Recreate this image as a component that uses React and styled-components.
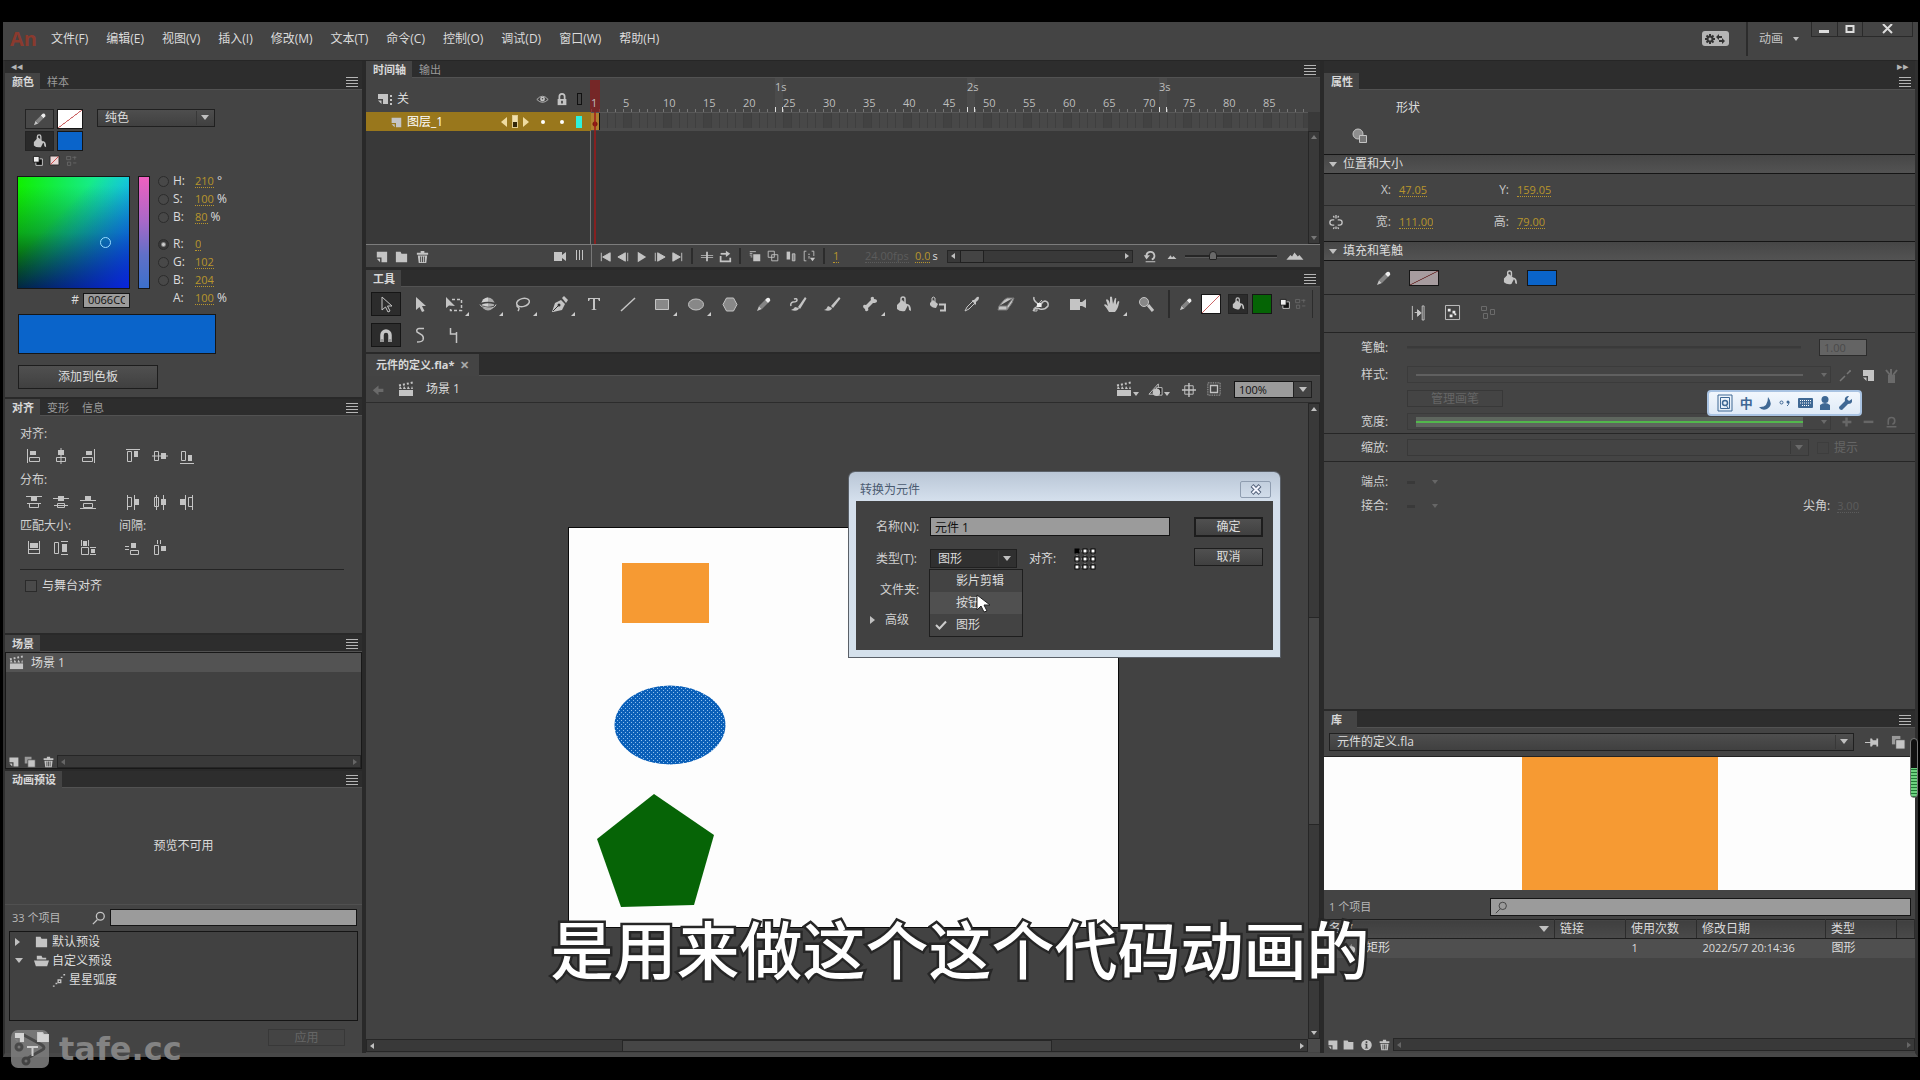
import React from "react";
import styled, { createGlobalStyle, css } from "styled-components";

const Global = createGlobalStyle`
  * { box-sizing: border-box; }
  html, body { margin: 0; background: #000; overflow: hidden; }
  body, button, input, select, table {
    font-family: "Open Sans", "Noto Sans CJK SC", sans-serif;
    font-size: 12px;
    line-height: 16px;
    color: #dcdcdc;
  }
  button { background: none; border: 0; padding: 0; margin: 0; }
  input { margin: 0; }
  svg { display: block; flex: none; }
`;

/* ---------- icons ---------- */
const F = "#c4c4c4";
const line = { fill: "none", stroke: F, strokeWidth: 1 };
const thick = { fill: "none", stroke: F, strokeWidth: 2 };

const DRAWINGS = {
  menu: <path d="M2 4.500h12M2 7.500h12M2 10.500h12M2 13.500h12" {...line} stroke="#b5b5b5" />,
  page: <path d="M3 3h11v11H8V9H3z M3 10.500h3.500V14z" fill={F} />,
  pageDots: <g fill={F}><path d="M1 3h10v10H6V8H1z M1 9.500h3.500V13z" /><path d="M13 4h2v2h-2zM13 8h2v2h-2zM13 12h2v2h-2z" /></g>,
  folder: <path d="M2 3h5l1 2h6v9H2z" fill={F} />,
  folderOpen: <path d="M3 3h5l1 2h4v2H3z M0 8h16l-2 6H2z" fill={F} />,
  trash: <g><path d="M3 7h10l-1 8H4z M2 4h12v2H2z M6 2h4v2H6z" fill={F} /><path d="M6 8v6M8 8v6M10 8v6" stroke="#444" /></g>,
  eye: <g><path d="M1 8q7-8 14 0q-7 7-14 0z" {...line} /><circle cx="8" cy="7.500" r="3" fill={F} /><circle cx="8" cy="7" r="1" fill="#444" /></g>,
  lock: <g><path d="M3 8h10v7H3z" fill={F} /><path d="M5 8V5q0-3 3-3t3 3v3" {...thick} /><path d="M7 10h2v3H7z" fill="#444" /></g>,
  camera: <path d="M2 4h8v3l4-3v9l-4-3v3H2z" fill={F} />,
  bars: <path d="M4.500 2v10M7.500 2v10M10.500 2v10" {...line} />,
  first: <path d="M3.500 4v9M13 4v9L5 8.500z" {...line} fill={F} />,
  prev: <path d="M10 4v9L2 8.500zM12.500 4v9" {...line} fill={F} />,
  play: <path d="M4 3l9 5.500L4 14z" fill={F} />,
  next: <path d="M6 4v9l8-4.500zM3.500 4v9" {...line} fill={F} />,
  last: <path d="M3 4v9l8-4.500zM12.500 4v9" {...line} fill={F} />,
  centerFrame: <g fill={F}><path d="M7 3h2v11H7z" /><path d="M1 7h14v1H1zM1 9h14v1H1z" /></g>,
  loopHead: <g><path d="M3 8v6h11v-4" {...thick} /><path d="M3 5.500h7" {...thick} /><path d="M9 2l5 3.500L9 9z" fill={F} /></g>,
  onion1: <g><path d="M6 6h8v8H6z" fill={F} /><path d="M2 3h7M2 5h3M2 7h3M3 9h2" {...line} /></g>,
  onion2: <path d="M2.500 2.500h7v7h-7zM6.500 6.500h7v7h-7z" {...line} />,
  onion3: <g><path d="M3 3h4v9H3z" fill={F} /><path d="M9.500 5.500h3v8h-3z" {...line} fill="#888" /></g>,
  onion4: <g><path d="M5 2.500H2.500v11H5M11 2.500h2.500V8M7 6h2M8 8v3" {...line} /><path d="M9 10h6l-3 4z" fill={F} /></g>,
  reset: <g><path d="M4 8a4.500 4.500 0 1 1 6 4" {...thick} /><path d="M1 7h7L4 12zM3 14h11v1H3z" fill={F} /></g>,
  hillSmall: <path d="M2 12l4-5 2 3 2-2 4 4z" fill={F} />,
  hillBig: <path d="M-2 12l5-6 2 2 3-5 4 5 2-2 5 6z" fill={F} />,
  back: <path d="M8 3v4h6v4H8v4L1 9z" fill="#6a6a6a" />,
  clapper: <g><path d="M1 9h14v6H1z" fill={F} /><path d="M1 8l1-3 2 3zM5 8l1-3 2 3zM9 8l1-3 2 3zM13 8l1-3 1 3z" fill={F} /><path d="M1 4.500l14-3" {...thick} strokeDasharray="2 2" /></g>,
  symbols: <g><path d="M1 13L11 2v11z" {...line} /><path d="M9 6h6v8H9z" fill="#222" stroke={F} /><circle cx="9" cy="11" r="4" fill={F} /></g>,
  crosshair: <g><path d="M4 4h9v9H4z" {...line} /><path d="M8.500 1v15M1 8.500h15" {...line} strokeWidth="1.500" /></g>,
  clip: <g><path d="M4 4h8v8H4z" {...thick} strokeWidth="1.500" /><path d="M1 1h14v14H1z" {...line} strokeDasharray="1 1" /></g>,
  arrowOutline: <path d="M4 1v13l3.500-3 2.500 5 2-1-2.500-5H14z" {...line} />,
  arrow: <path d="M4 1v13l3.500-3 2.500 5 2.500-1-2.500-5H14z" fill={F} />,
  transform: <g><path d="M6 3.500h9.500v11h-11V11" {...line} strokeWidth="1.500" strokeDasharray="3 2" /><path d="M0 1v11l3-2.500L9 10z" fill={F} /></g>,
  rotate3d: <g><circle cx="8" cy="8" r="6.500" fill="#aaa" /><path d="M8 1.500a6.500 6.500 0 0 0-6.500 6q3 3 6.500 3z" fill="#d0d0d0" /><ellipse cx="8" cy="9" rx="7.500" ry="2.500" fill="none" stroke="#444" strokeWidth="1.500" /><path d="M0 8.500q1 3 8 3.500t8-3.500" {...line} /></g>,
  lasso: <g><ellipse cx="9" cy="6.500" rx="6.500" ry="4" transform="rotate(-14 9 6.500)" {...line} strokeWidth="1.500" /><path d="M4 9q-2 1 0 2t0 4" {...line} strokeWidth="1.500" /></g>,
  pen: <g><path d="M0 16l3-9 6-3 4 4-3 6-9 2z" fill={F} /><path d="M10 2l2-2 4 4-2 3z" fill={F} /><path d="M1 15l6-6" stroke="#333" /><circle cx="7" cy="9" r="1.500" fill="#333" /></g>,
  text: <path d="M2 2h12v3h-1l-1-2H9v10l2 1H5l2-1V3H4L3 5H2z" fill={F} />,
  line: <path d="M1 15L15 2" {...line} strokeWidth="1.500" />,
  rect: <path d="M1.500 3.500h13v10h-13z" fill="#888" stroke={F} />,
  oval: <ellipse cx="8" cy="8.500" rx="7.500" ry="5.500" fill="#888" stroke={F} />,
  hex: <path d="M4.500 2h7L15 8.500 11.500 15h-7L1 8.500z" fill="#888" stroke={F} />,
  pencil: <g><path d="M1 15l2-5 3 3z" fill={F} /><path d="M3 10l6-6 3 3-6 6z" fill="#858585" /><path d="M9 4l2-2q2-1 3 1t-1 3l-1 1z" fill="#eee" /></g>,
  brushWave: <g><path d="M8 11l7-10 1.500 1.500L10 13z" fill={F} /><path d="M1 14q3-1 4-3l4 1q-1 4-8 2z" fill={F} /><path d="M1 10q-1-3 2-4 4 0 4-2 0-2-3-1" {...line} strokeWidth="1.500" /></g>,
  brush: <path d="M0 14q3-1 4-4l4 2q-1 4-8 2zM7 10l8-9 1.500 1.500L9 12z" fill={F} />,
  bone: <path d="M1 10q1-2 3-1l5-5q-1-3 1-3 2-1 2 2 3 0 3 2 0 2-4 2l-5 5q1 3-1 3-2 1-2-2-2-1-2-3z" fill={F} />,
  bucket: <g><path d="M1 9l5-5 6 5-3 6q-5 1-8-2z" fill={F} /><path d="M5 7V3q0-2 2-2t2 2v4" {...line} strokeWidth="1.500" /><path d="M11 8q4 0 4 7l-2-1q0-4-2-5z" fill={F} /></g>,
  inkBottle: <g><path d="M0 7l3-3 5 4-2 4q-4 0-6-3z" fill={F} /><path d="M2 6V2q1-2 3 0v4" {...line} /><path d="M9 8.500h6v6h-5" {...thick} /></g>,
  dropper: <g><path d="M1 15l2-4 6-6 2 2-6 6z" {...line} /><path d="M8 4l2 0 3-3q2-1 2 1t-3 4v2l-1 1z" fill={F} /></g>,
  eraser: <path d="M6 4l3-2h7l-2 5-5 7H0l1-4z M1 10h8l6-8M9 10v4" fill={F} stroke="#777" />,
  width: <g><path d="M2 1q-1 3 3 6t4 3q0-4 4-5 4 1 3 5-3 4-8 3-4-2-7 2" {...line} strokeWidth="1.500" /><path d="M3 12l7-8M2 12h3v3H2z" {...line} /><path d="M5 7h4v4H5z" fill="#eee" /></g>,
  movie: <path d="M0 3h10v3h2l4-3v9l-4-2h-2v4H0z" fill={F} />,
  hand: <path d="M5 16q-3-5-5-7 1-2 4 1L2 4q1-2 3 1l1 3V1q1-1 2 0l1 7 2-6q2 0 1 2v5l2-4q2 0 1 2-1 6-4 9z" fill={F} />,
  zoom: <g><circle cx="6" cy="6" r="4.500" fill="#888" stroke={F} /><path d="M10 9l5 6" {...thick} strokeWidth="3" /></g>,
  search: <g fill="none" stroke={F} strokeWidth="1.500"><circle cx="9.500" cy="6" r="4.500" /><path d="M6 10l-5 5" /></g>,
  searchDark: <g fill="none" stroke="#333"><circle cx="9.500" cy="6" r="4.500" /><path d="M6 10l-5 5" /></g>,
  magnet: <g><path d="M4 14V8a4 4 0 0 1 8 0v6" {...thick} strokeWidth="3.500" /><path d="M2 12h4v3H2zM10 12h4v3h-4z" fill="#999" /></g>,
  smooth: <path d="M12 1.500H7Q4 2 5 5l5 3q2 2 1 5-1 2-6 2" {...line} strokeWidth="1.500" />,
  straighten: <path d="M4.500 1v6h6v9M10.500 7V5" {...line} strokeWidth="1.500" />,
  blackWhite: <g><path d="M6 6h8v8H6z" fill="#111" stroke="#ddd" /><path d="M3 3h7v7H3z" fill="#eee" stroke="#111" /></g>,
  none: <g><path d="M2.500 2.500h11v11h-11z" fill="#ead7d7" stroke="#222" /><path d="M3 13L13 3" stroke="#c33" /></g>,
  swap: <path d="M2 3h5v4H2zM3 10h4v4H3zM9 4h5M12 3v4M10 11h4" {...line} stroke="#6b6b6b" />,
  shape: <g><circle cx="6" cy="6" r="5" fill="#8e8e8e" stroke={F} /><path d="M7.500 7.500h7v7h-7z" fill="#777" stroke={F} /></g>,
  unlink: <path d="M6 5.500H4q-3 0-3 3t3 3h2M10 5.500h2q3 0 3 3t-3 3h-2M8 0v4M8 13v3M5 1l1 2M11 1l-1 2M5 16l1-2M11 16l-1-2" {...line} strokeWidth="1.500" />,
  edge: <g><path d="M2.500 1v15M13 1h2v15h-2z" {...line} /><path d="M5 8h4M8 5l4 3.500L8 12z" fill={F} stroke={F} /></g>,
  dots: <g><path d="M.5 .5h15v15H.500z" {...line} /><path d="M3 4h3v3H3zM8 6h3v3H8zM5 10h3v3H5z M10 9h2v2h-2z" fill="#eee" /></g>,
  objDraw: <path d="M1.500 2.500h5v4h-5zM3.500 9.500h4v5h-4zM10.500 5.500h4v5h-4z" {...line} stroke="#6b6b6b" />,
  pin: <path d="M0 8h6V4h2l1 2h4V4h2v9h-2v-2H9l-1 2H6V9H0z" fill={F} />,
  copy: <g><path d="M1 1h9v9H1z" fill="#999" /><path d="M5 5h10v10H5z" fill={F} stroke="#444" /></g>,
  info: <g><circle cx="8" cy="8.500" r="6.500" fill={F} /><path d="M7 4h2v2H7zM6 7h3v5h1v1H6v-1h1V8H6z" fill="#444" /></g>,
  motion: <path d="M1 15h2M4 12h2M7 8h3v3H7zM10 5h2M13 2h2" {...thick} strokeWidth="1.500" />,
  graphic: <g><path d="M3 13L11 3l2 10z" fill="#888" /><circle cx="11" cy="10" r="4" fill={F} /></g>,
  wand: <path d="M2 14l5-5M9 7l3-3M11 4h2" {...line} stroke="#777" strokeWidth="1.500" />,
  brushes: <path d="M6 9h5v6H6zM8 8V2M7 8L3 3M10 8l4-5" fill="#6b6b6b" stroke="#6b6b6b" strokeWidth="2" />,
  plus: <path d="M8 3v11M3 8.500h11" {...thick} stroke="#676767" strokeWidth="3" />,
  minus: <path d="M2 8.500h12" {...thick} stroke="#676767" strokeWidth="3" />,
  undo: <path d="M4 12V7q0-4 4-4t4 4-3 4M2 14.500h12" {...thick} stroke="#676767" />,
  alL: <g><path d="M1.500 1v14M3.500 9.500h10v4h-10z" {...line} /><path d="M4 3h6v4H4z" fill={F} /></g>,
  alC: <g><path d="M8 0v16M3.500 9.500h9v4h-9z" {...line} /><path d="M5 2h6v5H5z" fill={F} /></g>,
  alR: <g><path d="M14.500 1v14M2.500 9.500h10v4h-10z" {...line} /><path d="M6 3h6v4H6z" fill={F} /></g>,
  alT: <g><path d="M1 1.500h14M2.500 3.500h4v10h-4z" {...line} /><path d="M9 3h4v6H9z" fill={F} /></g>,
  alM: <g><path d="M0 8h16M2.500 3.500h4v9h-4z" {...line} /><path d="M9 5h5v6H9z" fill={F} /></g>,
  alB: <g><path d="M1 15.500h14M2.500 3.500h4v9h-4z" {...line} /><path d="M9 7h4v6H9z" fill={F} /></g>,
  diT: <g><path d="M0 2.500h16M1 9.500h14M3.500 9.500h9v4h-9z" {...line} /><path d="M5 3h6v4H5z" fill={F} /></g>,
  diM: <g><path d="M0 4.500h16M1 11.500h14M4.500 9.500h7v4h-7z" {...line} /><path d="M5 2h6v5H5z" fill={F} /></g>,
  diB: <g><path d="M0 6.500h16M0 14.500h16M3.500 9.500h9v4h-9z" {...line} /><path d="M5 2h6v4H5z" fill={F} /></g>,
  diL: <g><path d="M2.500 1v15M9.500 1v15M3 3.500h3.500v9H3" {...line} /><path d="M10 5h4v6h-4z" fill={F} /></g>,
  diC: <g><path d="M4.500 1v15M11.500 1v15M2.500 3.500h4v9h-4z" {...line} /><path d="M9 5h5v6H9z" fill={F} /></g>,
  diR: <g><path d="M6.500 1v15M13.500 1v15M9.500 3.500h4v9h-4z" {...line} /><path d="M1 5h5v6H1z" fill={F} /></g>,
  maW: <g><path d="M2.500 1v13M13.500 1v13M2.500 9.500h11v4h-11z" {...line} /><path d="M4 3h8v5H4z" fill={F} /></g>,
  maH: <g><path d="M1.500 2.500h4v11h-4zM8 1.500h7M8 14.500h7" {...line} /><path d="M9 4h5v8H9z" fill={F} /></g>,
  maB: <g><path d="M1.500 7.500h7v7h-7zM1.500 0v6M8.500 0v6M10 7.500h6M10 14.500h6" {...line} /><path d="M3 1h4v5H3zM11 9h4v4h-4z" fill={F} /></g>,
  spV: <g><path d="M0 6.500h4M0 9.500h4M5.500 10.500h8v4h-8z" {...line} /><path d="M6 3h5v5H6z" fill={F} /></g>,
  spH: <g><path d="M5.500 0v4M8.500 0v4M2.500 5.500h4v9h-4z" {...line} /><path d="M9 6h5v5H9z" fill={F} /></g>,
};

const Icon = ({ name, size = 16 }) => (
  <svg width={size} height={size} viewBox="0 0 16 16" overflow="visible" aria-hidden="true">
    {DRAWINGS[name]}
  </svg>
);

/* ---------- shared parts ---------- */
const Page = styled.div`
  height: 100vh;
  min-height: 700px;
  padding: 22px 2px 23px 3px;
  background: #000;
  position: relative;
  overflow: hidden;
`;
const Window = styled.div`
  height: 100%;
  background: #444;
  display: flex;
  flex-direction: column;
`;
const Work = styled.div`
  flex: 1;
  min-height: 0;
  display: grid;
  grid-template-columns: 357px minmax(0, 1fr) 591px;
  column-gap: 4px;
  background: #292929;
  border-top: 1px solid #262626;
  border-left: 2px solid #303030;
  border-right: 3px solid #303030;
  border-bottom: 4px solid #484848;
`;
const Column = styled.div`
  display: flex;
  flex-direction: column;
  gap: 2px;
  min-width: 0;
  min-height: 0;
`;
const DockBar = styled.div`
  height: 12px;
  margin-bottom: -2px;
  padding: 0 6px;
  background: #2d2d2d;
  color: #b5b5b5;
  font-size: 11px;
  line-height: 9px;
  text-align: ${(p) => (p.$right ? "right" : "left")};
`;
const Panel = styled.section`
  display: flex;
  flex-direction: column;
  background: #444;
  min-height: 0;
  ${(p) => (p.$h ? css`height: ${p.$h}px; flex: none;` : css`flex: 1;`)}
`;
const Tabs = styled.div`
  height: ${(p) => p.$h || 17}px;
  flex: none;
  display: flex;
  align-items: stretch;
  background: #2d2d2d;
  border-bottom: 1px solid #525252;
`;
const Tab = styled.button`
  padding: 0 6px 0 7px;
  margin-bottom: -1px;
  font-size: 11px;
  line-height: 16px;
  ${(p) => (p.$on ? css`background: #444; font-weight: 700; color: #d8d8d8;` : css`color: #9a9a9a;`)}
`;
const MenuButton = styled.button`
  margin-left: auto;
  padding-right: 2px;
`;
const Grow = styled.div`
  flex: 1;
  min-width: 0;
`;
const IconBtn = styled.button`
  width: ${(p) => p.$w || 18}px;
  height: 18px;
  flex: none;
  display: flex;
  align-items: center;
  justify-content: center;
`;
const Tri = styled.i`
  flex: none;
  width: 0;
  height: 0;
  ${({ $d = "down", $s = 4, $c = "#c0c0c0" }) =>
    $d === "down" || $d === "up"
      ? css`
          border-left: ${$s}px solid transparent;
          border-right: ${$s}px solid transparent;
          ${$d === "down" ? "border-top" : "border-bottom"}: ${$s + 1}px solid ${$c};
        `
      : css`
          border-top: ${$s}px solid transparent;
          border-bottom: ${$s}px solid transparent;
          ${$d === "right" ? "border-left" : "border-right"}: ${$s + 1}px solid ${$c};
        `}
`;
const Hot = styled.input`
  field-sizing: content;
  width: auto;
  min-width: 6px;
  padding: 0;
  border: 0;
  border-bottom: 1px dotted currentColor;
  background: none;
  font-size: 11px;
  line-height: 12px;
  height: 14px;
  color: ${(p) => (p.$dim ? "#5c5c5c" : "#b8952c")};
`;
const PushButton = styled.button`
  height: ${(p) => p.$h || 18}px;
  width: ${(p) => p.$w}px;
  border: ${(p) => (p.$main ? 2 : 1)}px solid #1d1d1d;
  background: linear-gradient(#505050, #404040);
  color: #dcdcdc;
  align-self: start;
  &:disabled { color: #666; border-color: #383838; background: none; align-self: center; }
`;
const SelectBox = styled.div`
  position: relative;
  display: flex;
  height: ${(p) => p.$h || 18}px;
  flex: ${(p) => (p.$w ? "none" : 1)};
  width: ${(p) => (p.$w ? p.$w + "px" : "auto")};
  border: 1px solid ${(p) => (p.$dim ? "#393939" : "#202020")};
  background: ${(p) => (p.$dim ? "none" : p.$dark ? "#303030" : "linear-gradient(#4e4e4e, #404040)")};
  select {
    appearance: none;
    flex: 1;
    min-width: 0;
    border: 0;
    padding: 0 20px 0 7px;
    background: none;
    opacity: 1;
    color: #dcdcdc;
  }
  i {
    position: absolute;
    right: 5px;
    top: 50%;
    margin-top: -3px;
    pointer-events: none;
  }
  &::after {
    content: "";
    position: absolute;
    right: 17px;
    top: 1px;
    bottom: 1px;
    border-left: 1px solid #383838;
  }
`;
const Select = ({ label, options, dim, ...rest }) => (
  <SelectBox $dim={dim} {...rest}>
    <select aria-label={label} disabled={dim}>
      {options.map((o) => <option key={o}>{o}</option>)}
    </select>
    <Tri $c={dim ? "#6a6a6a" : "#c0c0c0"} />
  </SelectBox>
);
const Field = styled.input`
  min-width: 0;
  width: ${(p) => (p.$w ? p.$w + "px" : "auto")};
  flex: ${(p) => (p.$w ? "none" : 1)};
  height: ${(p) => p.$h || 17}px;
  padding: 0 4px;
  border: 1px solid #151515;
  background: #9b9b9b;
  color: #111;
  font-size: ${(p) => (p.$small ? 11 : 12)}px;
`;
const ScrollBar = styled.div`
  display: flex;
  flex-direction: ${(p) => (p.$v ? "column" : "row")};
  align-items: center;
  justify-content: space-between;
  background: #393939;
  border: 1px solid #262626;
  ${(p) => (p.$v ? "width: 12px; padding: 3px 0;" : "height: 13px; flex: 1; padding: 0 3px;")}
`;
const Thumb = styled.div`
  background: #464646;
  border: 1px solid #262626;
  ${(p) => (p.$v ? "width: 12px;" : "height: 12px;")}
`;
const Swatch = styled.button`
  width: ${(p) => p.$w || 26}px;
  height: ${(p) => p.$h || 20}px;
  flex: none;
  border: 1px solid #161616;
  background: ${(p) => p.$bg};
`;
const NO_STROKE = "linear-gradient(to bottom right, #fff 48%, #c66 49%, #c66 51%, #fff 52%)";
const NO_STROKE_DIM = "linear-gradient(to bottom right, #a79c9f 47%, #744 49%, #744 51%, #a79c9f 53%)";

/* ---------- menu bar ---------- */
const MenuBar = styled.header`
  height: 38px;
  flex: none;
  display: flex;
  align-items: flex-start;
`;
const Logo = styled.strong`
  width: 39px;
  padding-left: 7px;
  font: 700 20px/34px "Open Sans", sans-serif;
  color: #8a3a2e;
`;
const Menu = styled.button`
  padding: 0 9px;
  line-height: 34px;
`;
const Divider = styled.span`
  width: ${(p) => p.$w || 12}px;
  height: ${(p) => p.$h || 16}px;
  flex: none;
  background: linear-gradient(90deg, transparent 45%, #2c2c2c 45%, #2c2c2c 55%, transparent 55%);
`;
const Workspace = styled.div`
  margin-left: auto;
  display: flex;
  align-items: flex-start;
`;
const Gear = styled.button`
  margin: 9px 12px 0 0;
  width: 27px;
  height: 15px;
  border-radius: 3px;
  background: #b5b5b5;
  display: flex;
  align-items: center;
  justify-content: center;
`;
const WorkspaceButton = styled.button`
  display: flex;
  align-items: center;
  gap: 10px;
  height: 34px;
  padding: 0 12px 0 6px;
  color: #c4c4c4;
`;
const WindowButtons = styled.div`
  display: flex;
  width: 102px;
  height: 15px;
  border: 1px solid #2a2a2a;
  border-top: 0;
  margin-right: 5px;
  button { flex: 1; display: flex; align-items: center; justify-content: center; border-right: 1px solid #2a2a2a; }
  button:last-child { flex: 2; border: 0; }
`;
const MENUS = ["文件(F)", "编辑(E)", "视图(V)", "插入(I)", "修改(M)", "文本(T)", "命令(C)", "控制(O)", "调试(D)", "窗口(W)", "帮助(H)"];

const TopBar = () => (
  <MenuBar>
    <Logo>An</Logo>
    {MENUS.map((m) => <Menu key={m}>{m}</Menu>)}
    <Workspace>
      <Gear aria-label="同步设置">
        <svg width="22" height="12" viewBox="0 0 22 12">
          <path d="M6 1v10M1 6h10M2.500 2.500l7 7M9.500 2.500l-7 7" stroke="#333" strokeWidth="2" />
          <circle cx="6" cy="6" r="3.500" fill="#333" />
          <circle cx="6" cy="6" r="1.500" fill="#b5b5b5" />
          <path d="M12 4l3-3v2h3v2h-3v2zM21 8l-3 3V9h-3V7h3V5z" fill="#333" />
        </svg>
      </Gear>
      <Divider $h={34} />
      <WorkspaceButton>动画 <Tri $s={3} /></WorkspaceButton>
      <WindowButtons>
        <button aria-label="最小化"><svg width="10" height="10"><path d="M0 6h10v3H0z" fill="#ddd" /></svg></button>
        <button aria-label="最大化"><svg width="10" height="10"><path d="M1.500 2h7v6h-7z" fill="none" stroke="#ddd" strokeWidth="2" /></svg></button>
        <button aria-label="关闭"><svg width="11" height="10"><path d="M1 0l9 9M10 0L1 9" stroke="#ddd" strokeWidth="2" /></svg></button>
      </WindowButtons>
    </Workspace>
  </MenuBar>
);

/* ---------- colour panel ---------- */
const ColorBody = styled.div`
  padding: 19px 12px 0 12px;
`;
const ColorTop = styled.div`
  display: flex;
  align-items: flex-start;
  gap: 14px;
  padding-left: 8px;
  height: 67px;
`;
const PaintGrid = styled.div`
  display: grid;
  grid-template-columns: 29px 26px;
  gap: 2px 3px;
`;
const ToolCell = styled.button`
  height: 20px;
  border: 1px solid #242424;
  background: ${(p) => (p.$on ? "#2a2a2a" : "#484848")};
  display: flex;
  align-items: center;
  justify-content: center;
`;
const MiniIcons = styled.div`
  grid-column: 1 / 3;
  display: flex;
  padding-left: 6px;
  gap: 1px;
  button { width: 16px; height: 14px; }
`;
const Mixer = styled.div`
  display: flex;
`;
const FieldCol = styled.div`
  width: 113px;
`;
const ColorField = styled.div`
  height: 113px;
  border: 1px solid #161616;
  background:
    linear-gradient(to top, rgba(0, 10, 20, 0.92), rgba(0, 40, 60, 0.35) 50%, transparent 92%) 0 0 / 100% 100%,
    linear-gradient(90deg, #10f000, #19e9cf);
  position: relative;
  &::before {
    content: "";
    position: absolute;
    inset: 0;
    background: linear-gradient(to top left, rgba(10, 40, 255, 0.85), rgba(0, 80, 255, 0.2) 50%, transparent 65%);
  }
`;
const Ring = styled.span`
  position: absolute;
  left: 82px;
  top: 60px;
  width: 11px;
  height: 11px;
  border: 1px solid #9df;
  border-radius: 50%;
`;
const HexRow = styled.label`
  display: flex;
  justify-content: flex-end;
  align-items: center;
  gap: 4px;
  padding-top: 3px;
`;
const Hue = styled.div`
  width: 12px;
  height: 113px;
  margin: 0 8px;
  border: 1px solid #161616;
  background: linear-gradient(#f060c0, #a868c8 40%, #6070c8 70%, #3c70cc);
`;
const Channel = styled.label`
  display: grid;
  grid-template-columns: 15px 22px auto;
  height: 18px;
  margin-top: ${(p) => (p.$gap ? 9 : 0)}px;
  align-items: center;
`;
const ChannelList = styled.div`
  margin-top: -4px;
`;
const Radio = styled.input`
  appearance: none;
  width: 11px;
  height: 11px;
  border-radius: 50%;
  border: 1px solid #2c2c2c;
  background: #484848;
  &:checked { background: radial-gradient(#ccc 1px, #383838 3px); }
`;
const Value = styled.span`
  display: flex;
  gap: 3px;
  align-items: center;
`;
const Preview = styled.div`
  width: 198px;
  height: 40px;
  margin: 6px 0 11px 1px;
  border: 1px solid #161616;
  background: #0a64ca;
`;
const AddSwatch = styled(PushButton)`
  margin-left: 1px;
`;
const CHANNELS = [
  ["H", "210", "°"], ["S", "100", "%"], ["B", "80", "%"],
  ["R", "0", ""], ["G", "102", ""], ["B", "204", ""], ["A", "100", "%"],
];

const ColorPanel = () => (
  <Panel $h={324}>
    <Tabs>
      <Tab $on>颜色</Tab>
      <Tab>样本</Tab>
      <MenuButton aria-label="面板菜单"><Icon name="menu" /></MenuButton>
    </Tabs>
    <ColorBody>
      <ColorTop>
        <PaintGrid>
          <ToolCell aria-label="笔触颜色"><Icon name="pencil" size={14} /></ToolCell>
          <Swatch $bg={NO_STROKE} aria-label="无笔触" />
          <ToolCell $on aria-label="填充颜色"><Icon name="bucket" size={14} /></ToolCell>
          <Swatch $bg="#0a64ca" aria-label="填充色" />
          <MiniIcons>
            <button aria-label="黑白"><Icon name="blackWhite" size={13} /></button>
            <button aria-label="无颜色"><Icon name="none" size={13} /></button>
            <button aria-label="交换颜色"><Icon name="swap" size={13} /></button>
          </MiniIcons>
        </PaintGrid>
        <Select label="颜色类型" options={["纯色"]} $w={118} />
      </ColorTop>
      <Mixer>
        <FieldCol>
          <ColorField><Ring /></ColorField>
          <HexRow>
            # <Field $w={47} $h={15} $small defaultValue="0066CC" />
          </HexRow>
        </FieldCol>
        <Hue />
        <ChannelList>
          {CHANNELS.map(([n, v, u], i) => (
            <Channel key={i} $gap={i === 3}>
              {n === "A" ? <span /> : <Radio type="radio" name="channel" defaultChecked={n === "R"} aria-label={n} />}
              <span>{n}:</span>
              <Value><Hot defaultValue={v} aria-label={n} />{u}</Value>
            </Channel>
          ))}
        </ChannelList>
      </Mixer>
      <Preview />
      <AddSwatch $w={140} $h={24}>添加到色板</AddSwatch>
    </ColorBody>
  </Panel>
);

/* ---------- align panel ---------- */
const AlignBody = styled.div`
  padding: 7px 18px 0 15px;
`;
const AlignGrid = styled.div`
  display: grid;
  grid-template-columns: 99px 1fr;
  grid-template-rows: 19px 28px;
  grid-auto-rows: 18px 28px;
  align-items: center;
  color: #d0d0d0;
  padding-bottom: 7px;
  border-bottom: 1px solid #242424;
  > span { padding-top: 2px; }
`;
const AlignSet = styled.div`
  display: flex;
`;
const Check = styled.label`
  display: flex;
  align-items: center;
  gap: 5px;
  padding: 8px 0 0 5px;
  input {
    appearance: none;
    width: 12px;
    height: 12px;
    border: 1px solid #2a2a2a;
    background: #4a4a4a;
  }
`;
const Set = ({ names }) => (
  <AlignSet>{names.map((n) => <IconBtn key={n} $w={27} aria-label={n}><Icon name={n} /></IconBtn>)}</AlignSet>
);
const AlignPanel = () => (
  <Panel $h={234}>
    <Tabs>
      <Tab $on>对齐</Tab>
      <Tab>变形</Tab>
      <Tab>信息</Tab>
      <MenuButton aria-label="面板菜单"><Icon name="menu" /></MenuButton>
    </Tabs>
    <AlignBody>
      <AlignGrid>
        <span>对齐:</span><span />
        <Set names={["alL", "alC", "alR"]} /><Set names={["alT", "alM", "alB"]} />
        <span>分布:</span><span />
        <Set names={["diT", "diM", "diB"]} /><Set names={["diL", "diC", "diR"]} />
        <span>匹配大小:</span><span>间隔:</span>
        <Set names={["maW", "maH", "maB"]} /><Set names={["spV", "spH"]} />
      </AlignGrid>
      <Check><input type="checkbox" /> 与舞台对齐</Check>
    </AlignBody>
  </Panel>
);

/* ---------- scene panel ---------- */
const SceneBody = styled.div`
  flex: 1;
  display: flex;
  flex-direction: column;
  border: 1px solid #181818;
  background: #414141;
`;
const SceneRow = styled.div`
  display: flex;
  align-items: center;
  gap: 7px;
  height: 19px;
  padding-left: 3px;
  background: #535353;
`;
const Bottom = styled.div`
  margin-top: auto;
  display: flex;
  align-items: center;
  height: 13px;
`;
const ScenePanel = () => (
  <Panel $h={134}>
    <Tabs>
      <Tab $on>场景</Tab>
      <MenuButton aria-label="面板菜单"><Icon name="menu" /></MenuButton>
    </Tabs>
    <SceneBody>
      <SceneRow><Icon name="clapper" size={15} /> 场景 1</SceneRow>
      <Bottom>
        <IconBtn $w={15} aria-label="添加场景"><Icon name="page" size={13} /></IconBtn>
        <IconBtn aria-label="重制场景"><Icon name="copy" size={12} /></IconBtn>
        <IconBtn aria-label="删除场景"><Icon name="trash" size={13} /></IconBtn>
        <ScrollBar><Tri $d="left" $s={3} $c="#666" /><Tri $d="right" $s={3} $c="#666" /></ScrollBar>
      </Bottom>
    </SceneBody>
  </Panel>
);

/* ---------- presets panel ---------- */
const PresetPreview = styled.div`
  flex: 1;
  display: flex;
  align-items: center;
  justify-content: center;
`;
const CountRow = styled.label`
  display: flex;
  align-items: center;
  gap: 4px;
  height: 26px;
  padding: 0 5px 0 7px;
  border-top: 1px solid #505050;
  font-size: 11px;
  color: #b8b8b8;
`;
const CountText = styled.span`
  width: ${(p) => p.$w}px;
`;
const Tree = styled.ul`
  list-style: none;
  margin: 1px 4px 0;
  padding: 0;
  height: 90px;
  border: 1px solid #151515;
  background: #414141;
`;
const TreeItem = styled.li`
  display: flex;
  align-items: center;
  height: 19px;
  padding-left: ${(p) => 5 + p.$in}px;
  gap: 3px;
`;
const TreeArrow = styled.span`
  width: 16px;
  display: flex;
`;
const PresetFoot = styled.div`
  display: flex;
  align-items: center;
  height: 32px;
  padding: 0 17px 0 5px;
  gap: 6px;
`;
const PresetPanel = () => (
  <Panel>
    <Tabs>
      <Tab $on>动画预设</Tab>
      <MenuButton aria-label="面板菜单"><Icon name="menu" /></MenuButton>
    </Tabs>
    <PresetPreview>预览不可用</PresetPreview>
    <CountRow>
      <CountText $w={76}>33 个项目</CountText>
      <Icon name="search" size={14} />
      <Field aria-label="搜索预设" />
    </CountRow>
    <Tree>
      <TreeItem $in={0}><TreeArrow><Tri $d="right" /></TreeArrow><Icon name="folder" size={15} /> 默认预设</TreeItem>
      <TreeItem $in={0}><TreeArrow><Tri /></TreeArrow><Icon name="folderOpen" size={15} /> 自定义预设</TreeItem>
      <TreeItem $in={37}><Icon name="motion" size={14} /> 星星弧度</TreeItem>
    </Tree>
    <PresetFoot>
      <IconBtn aria-label="另存为预设"><Icon name="page" size={14} /></IconBtn>
      <IconBtn aria-label="新建文件夹"><Icon name="folder" size={14} /></IconBtn>
      <Grow />
      <PushButton $w={77} $h={17} disabled>应用</PushButton>
    </PresetFoot>
  </Panel>
);

/* ---------- timeline ---------- */
const Timeline = styled.div`
  flex: 1;
  display: grid;
  grid-template-columns: 225px minmax(0, 1fr) 12px;
  grid-template-rows: 34px 19px minmax(0, 1fr);
  position: relative;
  background: #393939;
`;
const LayerHead = styled.div`
  display: flex;
  align-items: center;
  padding: 8px 0 0 11px;
  background: #444;
`;
const LayerRow = styled.div`
  display: flex;
  align-items: center;
  padding-left: 23px;
  background: #99771c;
  color: #fff;
`;
const Slot = styled.span`
  width: ${(p) => p.$w || 19}px;
  display: flex;
  justify-content: center;
  flex: none;
`;
const Dot = styled.span`
  width: 4px;
  height: 4px;
  border-radius: 50%;
  background: #fff;
`;
const KeyMark = styled.span`
  width: 6px;
  height: 13px;
  background: linear-gradient(#f0e0b0 50%, #33270a 50%);
  border: 1px solid #e0cc90;
`;
const Outline = styled.span`
  width: ${(p) => (p.$bg ? 6 : 5)}px;
  height: 12px;
  border: 1px solid ${(p) => p.$bg || "#111"};
  background: ${(p) => p.$bg || "none"};
`;
const Ruler = styled.div`
  display: grid;
  grid-template-columns: repeat(89, 8px);
  grid-template-rows: 16px 18px;
  font-size: 11px;
  color: #bdbdbd;
  background:
    repeating-linear-gradient(90deg, #777 0 1px, transparent 1px 8px) 0 100% / 100% 3px no-repeat,
    #444;
  span { white-space: nowrap; width: 0; z-index: 1; line-height: 18px; }
`;
const Second = styled.i`
  background: #4b4b4b;
  border: solid #ddd;
  border-width: 0 1px;
  border-image: linear-gradient(transparent 84%, #ddd 84%) 1;
`;
const Track = styled.div`
  background:
    linear-gradient(transparent 85%, #4b4b4b 85%),
    repeating-linear-gradient(90deg, #3f3f3f 0 1px, transparent 1px 8px),
    repeating-linear-gradient(90deg, #484848 0 32px, #424242 32px 40px);
  border-top: 1px solid #585858;
`;
const FirstKey = styled.div`
  width: 9px;
  height: 17px;
  background: radial-gradient(circle at 4px 11px, #7c1a10 2px, #b08030 3px);
  border-right: 1px solid #111;
`;
const Fill = styled.div`
  background: ${(p) => p.$bg || "none"};
  border-right: ${(p) => (p.$edge ? "1px solid #777" : "0")};
`;
const PlayHead = styled.div`
  position: absolute;
  left: 224px;
  top: 2px;
  width: 10px;
  height: 32px;
  background: rgba(150, 20, 20, 0.6);
`;
const PlayLine = styled.div`
  position: absolute;
  left: 228px;
  top: 34px;
  bottom: 0;
  width: 2px;
  background: rgba(160, 25, 25, 0.75);
`;
const ControlBar = styled.div`
  height: 24px;
  flex: none;
  display: flex;
  align-items: center;
  border-top: 1px solid #7c7c7c;
  border-bottom: 1px solid #2a2a2a;
  font-size: 11px;
`;
const LayerTools = styled.div`
  width: 226px;
  height: 100%;
  display: flex;
  align-items: center;
  padding: 0 1px 0 5px;
  border-right: 1px solid #777;
`;
const Readout = styled.span`
  width: ${(p) => p.$w}px;
  display: flex;
  align-items: center;
  gap: 2px;
`;
const FrameScroll = styled.div`
  width: 186px;
  display: flex;
  margin-right: 8px;
`;
const FrameThumb = styled.div`
  width: 24px;
  height: 13px;
  border: 1px solid #202020;
  background: #444;
  margin-right: auto;
  margin-left: 5px;
`;
const Slider = styled.input`
  appearance: none;
  background: none;
  width: ${(p) => (p.$w ? p.$w + "px" : "auto")};
  flex: ${(p) => (p.$w ? "none" : 1)};
  min-width: 0;
  height: 14px;
  &::-webkit-slider-runnable-track {
    height: 3px;
    background: #262626;
    border-bottom: 1px solid #5a5a5a;
    ${(p) => p.disabled && "background: #3a3a3a; border-color: #3f3f3f;"}
  }
  &::-webkit-slider-thumb {
    appearance: none;
    width: 8px;
    height: 9px;
    margin-top: -4px;
    background: #6a6a6a;
    border: 1px solid #222;
    border-radius: 4px 4px 1px 1px;
    ${(p) => p.disabled && "opacity: 0;"}
  }
`;
const FIVES = Array.from({ length: 17 }, (_, i) => (i + 1) * 5);

const TimelinePanel = () => (
  <Panel $h={207}>
    <Tabs>
      <Tab $on>时间轴</Tab>
      <Tab>输出</Tab>
      <MenuButton aria-label="面板菜单"><Icon name="menu" /></MenuButton>
    </Tabs>
    <Timeline>
      <LayerHead>
        <Icon name="pageDots" /><Slot $w={4} />关
        <Grow />
        <Slot><Icon name="eye" size={13} /></Slot>
        <Slot><Icon name="lock" size={14} /></Slot>
        <Slot $w={16}><Outline /></Slot>
        <Slot $w={4} />
      </LayerHead>
      <Ruler>
        {[1, 2, 3].map((s) => <Second key={s} style={{ gridColumn: s * 24, gridRow: "1 / 3" }} />)}
        {[1, 2, 3].map((s) => <span key={s} style={{ gridColumn: s * 24, gridRow: 1 }}>{s}s</span>)}
        <span style={{ gridColumn: 1, gridRow: 2 }}>1</span>
        {FIVES.map((n) => <span key={n} style={{ gridColumn: n, gridRow: 2 }}>{n}</span>)}
      </Ruler>
      <Fill $bg="#444" />
      <LayerRow>
        <Icon name="page" size={14} /><Slot $w={4} />图层_1
        <Grow />
        <Tri $d="left" $c="#f0dca0" $s={5} /><Slot $w={16}><KeyMark /></Slot><Tri $d="right" $c="#f0dca0" $s={5} /><Slot $w={4} />
        <Slot><Dot /></Slot>
        <Slot><Dot /></Slot>
        <Slot $w={16}><Outline $bg="#2ef0dc" /></Slot>
        <Slot $w={4} />
      </LayerRow>
      <Track><FirstKey /></Track>
      <Fill $bg="#393939" />
      <Fill $edge />
      <Fill />
      <ScrollBar $v><Tri $d="up" $s={3} $c="#777" /><Tri $s={3} $c="#777" /></ScrollBar>
      <PlayHead />
      <PlayLine />
    </Timeline>
    <ControlBar>
      <LayerTools>
        <IconBtn $w={20} aria-label="新建图层"><Icon name="page" size={15} /></IconBtn>
        <IconBtn $w={20} aria-label="新建文件夹"><Icon name="folder" size={15} /></IconBtn>
        <IconBtn $w={22} aria-label="删除"><Icon name="trash" size={15} /></IconBtn>
        <Grow />
        <IconBtn $w={20} aria-label="摄像头"><Icon name="camera" /></IconBtn>
        <IconBtn $w={20} aria-label="网格"><Icon name="bars" /></IconBtn>
      </LayerTools>
      <Slot $w={4} />
      {["first", "prev", "play", "next", "last"].map((n) => <IconBtn key={n} aria-label={n}><Icon name={n} size={15} /></IconBtn>)}
      <Divider />
      {["centerFrame", "loopHead"].map((n) => <IconBtn key={n} aria-label={n}><Icon name={n} size={14} /></IconBtn>)}
      <Divider />
      {["onion1", "onion2", "onion3", "onion4"].map((n) => <IconBtn key={n} aria-label={n}><Icon name={n} size={14} /></IconBtn>)}
      <Divider />
      <Slot $w={3} />
      <Readout $w={32}><Hot defaultValue="1" aria-label="当前帧" /></Readout>
      <Readout $w={50}><Hot $dim defaultValue="24.00fps" aria-label="帧频" /></Readout>
      <Readout $w={32}><Hot defaultValue="0.0" aria-label="时间" />s</Readout>
      <FrameScroll>
        <ScrollBar><Tri $d="left" $s={3} /><FrameThumb /><Tri $d="right" $s={3} /></ScrollBar>
      </FrameScroll>
      <IconBtn aria-label="重置缩放"><Icon name="reset" size={14} /></IconBtn>
      <IconBtn $w={26} aria-label="缩小"><Icon name="hillSmall" size={12} /></IconBtn>
      <Slider $w={92} type="range" defaultValue="28" aria-label="时间轴缩放" />
      <IconBtn $w={34} aria-label="放大"><Icon name="hillBig" size={13} /></IconBtn>
    </ControlBar>
  </Panel>
);

/* ---------- tools ---------- */
const ToolBody = styled.div`
  flex: 1;
  padding: 1px 2px 0 3px;
`;
const ToolRow = styled.div`
  display: flex;
  align-items: center;
  height: 31px;
`;
const ToolButton = styled.button`
  width: 34px;
  height: 24px;
  padding: 0 2px;
  flex: none;
  position: relative;
  span {
    display: flex;
    align-items: center;
    justify-content: center;
    height: 24px;
    ${(p) => p.$on && "background: #2c2c2c; border: 1px solid #161616;"}
  }
  ${(p) => p.$more && css`
    &::after {
      content: "";
      position: absolute;
      right: 2px;
      bottom: 0;
      border-left: 4px solid transparent;
      border-bottom: 4px solid #ccc;
    }
  `}
`;
const ToolButtonSmall = styled(ToolCell)`
  width: 20px;
  background: #2c2c2c;
`;
const Paints = styled.div`
  display: flex;
  align-items: center;
  margin-left: auto;
`;
const TOOLS = [
  ["arrowOutline", "on"], ["arrow"], ["transform", "more"], ["rotate3d", "more"], ["lasso", "more"], null,
  ["pen", "more"], ["text"], ["line"], ["rect", "more"], ["oval", "more"], ["hex"], ["pencil"], ["brushWave"], ["brush"], null,
  ["bone", "more"], ["bucket"], ["inkBottle"], ["dropper"], ["eraser"], ["width"], null,
  ["movie"], ["hand", "more"], ["zoom"],
];
const Tool = ({ name, state }) => (
  <ToolButton $on={state === "on"} $more={state === "more"} aria-label={name}>
    <span><Icon name={name} size={16} /></span>
  </ToolButton>
);
const ToolsPanel = () => (
  <Panel $h={82}>
    <Tabs>
      <Tab $on>工具</Tab>
      <MenuButton aria-label="面板菜单"><Icon name="menu" /></MenuButton>
    </Tabs>
    <ToolBody>
      <ToolRow>
        {TOOLS.map((t, i) => (t ? <Tool key={i} name={t[0]} state={t[1]} /> : <Divider key={i} $w={4} $h={28} />))}
        <Divider $w={12} $h={28} />
        <Paints>
          <IconBtn $w={22} aria-label="笔触"><Icon name="pencil" size={14} /></IconBtn>
          <Slot $w={4} />
          <Swatch $w={20} $h={20} $bg={NO_STROKE} aria-label="笔触颜色" />
          <Slot $w={7} />
          <ToolButtonSmall aria-label="填充"><Icon name="bucket" size={13} /></ToolButtonSmall>
          <Slot $w={4} />
          <Swatch $w={20} $h={20} $bg="#056405" aria-label="填充颜色" />
          <Slot $w={4} />
          <IconBtn $w={16} aria-label="黑白"><Icon name="blackWhite" size={13} /></IconBtn>
          <IconBtn $w={16} aria-label="交换"><Icon name="swap" size={13} /></IconBtn>
          <Divider $w={10} $h={28} />
        </Paints>
      </ToolRow>
      <ToolRow>
        <Tool name="magnet" state="on" />
        <Tool name="smooth" />
        <Tool name="straighten" />
      </ToolRow>
    </ToolBody>
  </Panel>
);

/* ---------- document ---------- */
const DocTab = styled(Tab)`
  padding: 0 10px;
  line-height: 20px;
  span { padding-left: 3px; color: #aaa; }
`;
const SceneBar = styled.div`
  height: 27px;
  flex: none;
  display: flex;
  align-items: center;
  padding: 0 8px 0 3px;
  border-bottom: 1px solid #2c2c2c;
  background: #434343;
`;
const DropIcon = styled(IconBtn)`
  gap: 1px;
  align-items: center;
  i { margin-top: 10px; }
`;
const ZoomBox = styled.div`
  display: flex;
  height: 17px;
  input { border-right: 0; }
  button {
    width: 19px;
    border: 1px solid #202020;
    display: flex;
    align-items: center;
    justify-content: center;
  }
`;
const CanvasArea = styled.div`
  flex: 1;
  min-height: 0;
  display: grid;
  grid-template-columns: minmax(0, 1fr) 12px;
  grid-template-rows: minmax(0, 1fr) 13px;
  background: #424242;
  padding-bottom: 1px;
`;
const CanvasView = styled.div`
  display: flex;
  align-items: center;
  justify-content: center;
  padding: 12px 0 0 12px;
  overflow: hidden;
`;
const Stage = styled.div`
  width: 551px;
  height: 401px;
  flex: none;
  background: #fdfdfd;
  border: 1px solid #0a0a0a;
`;
const VScroll = styled(ScrollBar).attrs({ $v: true })``;
const HScroll = styled(ScrollBar)`
  height: auto;
`;
const DocumentPanel = () => (
  <Panel>
    <Tabs $h={22}>
      <DocTab $on>元件的定义.fla* <span>✕</span></DocTab>
    </Tabs>
    <SceneBar>
      <IconBtn aria-label="返回"><Icon name="back" size={13} /></IconBtn>
      <Slot $w={10} />
      <IconBtn aria-label="场景"><Icon name="clapper" /></IconBtn>
      <Slot $w={11} />场景 1
      <Grow />
      <DropIcon $w={32} aria-label="编辑场景"><Icon name="clapper" /><Tri $s={3} /></DropIcon>
      <DropIcon $w={32} aria-label="编辑元件"><Icon name="symbols" size={15} /><Tri $s={3} /></DropIcon>
      <IconBtn $w={26} aria-label="舞台居中"><Icon name="crosshair" size={15} /></IconBtn>
      <IconBtn $w={26} aria-label="裁切"><Icon name="clip" size={14} /></IconBtn>
      <Slot $w={7} />
      <ZoomBox>
        <Field $w={59} $small defaultValue="100%" aria-label="缩放比例" />
        <button aria-label="选择缩放"><Tri /></button>
      </ZoomBox>
    </SceneBar>
    <CanvasArea>
      <CanvasView>
        <Stage>
          <svg width="549" height="399" viewBox="0 0 549 399">
            <defs>
              <pattern id="selected" width="4" height="4" patternUnits="userSpaceOnUse">
                <rect width="4" height="4" fill="#0a5fb8" />
                <path d="M0 0h1v1H0zM2 2h1v1H2z" fill="#8fc0ee" />
              </pattern>
            </defs>
            <rect x="53" y="35" width="87" height="60" fill="#f69a33" />
            <ellipse cx="101" cy="197" rx="55.500" ry="39.500" fill="url(#selected)" />
            <path d="M85 266l60 41-20 70-73 2-24-68z" fill="#066406" />
          </svg>
        </Stage>
      </CanvasView>
      <VScroll><Tri $d="up" $s={3} /><Thumb $v style={{ height: "33%" }} /><Tri $s={3} /></VScroll>
      <HScroll><Tri $d="left" $s={3} /><Thumb style={{ width: "46%" }} /><Tri $d="right" $s={3} /></HScroll>
      <Fill $bg="#4a4a4a" />
    </CanvasArea>
  </Panel>
);

/* ---------- properties ---------- */
const PropHead = styled.div`
  display: flex;
  height: 64px;
  padding: 10px 0 0 28px;
  gap: 28px;
  svg { margin-top: 28px; }
`;
const SectionHead = styled.button`
  display: flex;
  align-items: center;
  gap: 6px;
  height: 20px;
  flex: none;
  padding-left: 5px;
  border-top: 1px solid #151515;
  border-bottom: 1px solid #151515;
  background: linear-gradient(#464646, #535353);
`;
const PropLabel = styled.label`
  text-align: right;
  padding-right: 3px;
  color: #c8c8c8;
`;
const PairRow = styled.div`
  display: grid;
  grid-template-columns: 24px 46px 75px 43px 1fr;
  align-items: center;
  height: ${(p) => p.$h}px;
  flex: none;
  padding-bottom: ${(p) => (p.$last ? 3 : 0)}px;
  border-bottom: ${(p) => (p.$last ? 0 : 1)}px solid #2c2c2c;
  input { justify-self: start; margin-left: 5px; }
`;
const IconsRow = styled.div`
  display: flex;
  align-items: center;
  height: ${(p) => p.$h}px;
  flex: none;
  padding: 0 0 ${(p) => p.$up || 0}px ${(p) => p.$pad}px;
  border-bottom: 1px solid #242424;
`;
const StrokeRow = styled.div`
  display: flex;
  align-items: center;
  height: ${(p) => p.$h || 24}px;
  flex: none;
  padding: 0 12px 0 37px;
  border-bottom: ${(p) => (p.$line ? "1px solid #262626" : "0")};
  color: #d0d0d0;
`;
const StrokeName = styled.span`
  width: 46px;
  flex: none;
`;
const DimBox = styled.div`
  flex: 1;
  height: 17px;
  display: flex;
  align-items: center;
  border: 1px solid #3b3b3b;
  padding: 0 3px 0 8px;
  gap: 18px;
  margin-right: 4px;
`;
const Bar = styled.span`
  flex: 1;
  height: ${(p) => (p.$green ? 10 : 2)}px;
  background: ${(p) => (p.$green ? "linear-gradient(#5e665e 40%, #52b84c 40%, #52b84c 60%, #5e665e 60%)" : "#606060")};
`;
const MiniSelect = styled.button`
  display: flex;
  align-items: center;
  gap: 17px;
  &::before {
    content: "";
    width: 8px;
    height: 3px;
    background: #393939;
  }
`;
const DimCheck = styled(Check)`
  padding: 0;
  color: #666;
  width: 86px;
  margin-left: 8px;
  input { border-color: #3d3d3d; background: none; }
`;
const StrokeValue = styled.input`
  width: 48px;
  height: 17px;
  padding: 0 4px;
  border: 1px solid #2c2c2c;
  background: #646464;
  color: #4a4a4a;
  font-size: 11px;
`;
const Spacer = styled.div`
  height: 8px;
  flex: none;
`;
const Corner = styled.label`
  display: flex;
  align-items: center;
  gap: 7px;
  width: 100px;
`;
const PropertiesPanel = () => (
  <Panel $h={636}>
    <Tabs>
      <Tab $on>属性</Tab>
      <MenuButton aria-label="面板菜单"><Icon name="menu" /></MenuButton>
    </Tabs>
    <PropHead><Icon name="shape" /> 形状</PropHead>
    <SectionHead><Tri /> 位置和大小</SectionHead>
    <PairRow $h={32}>
      <span />
      <PropLabel htmlFor="px">X:</PropLabel><Hot id="px" defaultValue="47.05" />
      <PropLabel htmlFor="py">Y:</PropLabel><Hot id="py" defaultValue="159.05" />
    </PairRow>
    <PairRow $h={35} $last>
      <IconBtn $w={24} aria-label="锁定宽高"><Icon name="unlink" size={14} /></IconBtn>
      <PropLabel htmlFor="pw">宽:</PropLabel><Hot id="pw" defaultValue="111.00" />
      <PropLabel htmlFor="ph">高:</PropLabel><Hot id="ph" defaultValue="79.00" />
    </PairRow>
    <SectionHead><Tri /> 填充和笔触</SectionHead>
    <IconsRow $h={34} $pad={51}>
      <IconBtn aria-label="笔触"><Icon name="pencil" /></IconBtn>
      <Slot $w={16} />
      <Swatch $w={30} $h={16} $bg={NO_STROKE_DIM} aria-label="笔触颜色" />
      <Slot $w={62} />
      <IconBtn aria-label="填充"><Icon name="bucket" size={15} /></IconBtn>
      <Slot $w={8} />
      <Swatch $w={30} $h={16} $bg="#0a64ca" aria-label="填充颜色" />
    </IconsRow>
    <IconsRow $h={38} $pad={76} $up={3}>
      <IconBtn $w={35} aria-label="缩放笔触"><Icon name="edge" size={15} /></IconBtn>
      <IconBtn $w={35} aria-label="对象绘制"><Icon name="dots" size={15} /></IconBtn>
      <IconBtn $w={35} aria-label="创建对象"><Icon name="objDraw" /></IconBtn>
    </IconsRow>
    <StrokeRow $h={29}>
      <StrokeName>笔触:</StrokeName>
      <Slider type="range" disabled aria-label="笔触大小" />
      <Slot $w={18} />
      <StrokeValue disabled defaultValue="1.00" aria-label="笔触值" />
      <Slot $w={36} />
    </StrokeRow>
    <StrokeRow $h={25}>
      <StrokeName>样式:</StrokeName>
      <DimBox><Bar /><Tri $c="#6a6a6a" $s={3} /></DimBox>
      <IconBtn $w={22} aria-label="编辑样式"><Icon name="wand" /></IconBtn>
      <IconBtn $w={22} aria-label="画笔库"><Icon name="page" /></IconBtn>
      <IconBtn $w={24} aria-label="画笔"><Icon name="brushes" /></IconBtn>
    </StrokeRow>
    <StrokeRow $h={23}>
      <StrokeName />
      <PushButton $w={96} $h={17} disabled>管理画笔</PushButton>
    </StrokeRow>
    <StrokeRow $line>
      <StrokeName>宽度:</StrokeName>
      <DimBox><Bar $green /><Tri $c="#6a6a6a" $s={3} /></DimBox>
      <IconBtn $w={22} aria-label="添加"><Icon name="plus" size={13} /></IconBtn>
      <IconBtn $w={22} aria-label="移除"><Icon name="minus" size={13} /></IconBtn>
      <IconBtn $w={24} aria-label="重置"><Icon name="undo" size={13} /></IconBtn>
    </StrokeRow>
    <StrokeRow $h={28} $line>
      <StrokeName>缩放:</StrokeName>
      <Select label="缩放" dim options={[""]} $h={17} />
      <DimCheck><input type="checkbox" disabled /> 提示</DimCheck>
    </StrokeRow>
    <Spacer />
    <StrokeRow>
      <StrokeName>端点:</StrokeName>
      <MiniSelect aria-label="端点"><Tri $c="#666" $s={3} /></MiniSelect>
    </StrokeRow>
    <StrokeRow>
      <StrokeName>接合:</StrokeName>
      <MiniSelect aria-label="接合"><Tri $c="#666" $s={3} /></MiniSelect>
      <Grow />
      <Corner>尖角: <Hot $dim defaultValue="3.00" /></Corner>
    </StrokeRow>
  </Panel>
);

/* ---------- library ---------- */
const LibTop = styled.div`
  display: flex;
  align-items: center;
  height: 29px;
  flex: none;
  padding: 0 3px 0 5px;
  border-bottom: 1px solid #222;
`;
const LibPreview = styled.div`
  height: 133px;
  flex: none;
  display: flex;
  justify-content: center;
  background: #fdfdfd;
  &::before {
    content: "";
    width: 196px;
    background: #f69a33;
  }
`;
const LibSearch = styled.label`
  display: flex;
  align-items: center;
  height: 29px;
  flex: none;
  padding: 5px 4px 0 5px;
  font-size: 11px;
  color: #b8b8b8;
  input { height: 18px; padding-left: 24px; }
  svg { margin-right: -18px; z-index: 1; }
`;
const Table = styled.table`
  width: 100%;
  table-layout: fixed;
  border-collapse: collapse;
  th {
    height: 19px;
    padding: 0 5px;
    text-align: left;
    font-weight: 400;
    background: linear-gradient(#3f3f3f, #4a4a4a);
    border-right: 1px solid #2c2c2c;
    border-bottom: 1px solid #1e1e1e;
    border-top: 1px solid #1e1e1e;
  }
  td {
    height: 19px;
    padding: 0 6px;
    background: #4f4f4f;
    font-size: 11px;
    white-space: nowrap;
  }
`;
const NameCell = styled.div`
  display: flex;
  align-items: center;
  justify-content: ${(p) => (p.$head ? "space-between" : "flex-start")};
  gap: 10px;
  padding-left: ${(p) => (p.$head ? 0 : 12)}px;
  font-size: 12px;
`;
const TypeCell = styled.td`
  && { font-size: 12px; }
`;
const LibTab = styled(Tab)`
  padding-right: 15px;
`;
const LibFoot = styled(Bottom)`
  margin-bottom: 2px;
`;
const LibraryPanel = () => (
  <Panel>
    <Tabs>
      <LibTab $on>库</LibTab>
      <MenuButton aria-label="面板菜单"><Icon name="menu" /></MenuButton>
    </Tabs>
    <LibTop>
      <Select label="文档" options={["元件的定义.fla"]} />
      <Slot $w={6} />
      <IconBtn $w={24} aria-label="固定"><Icon name="pin" size={14} /></IconBtn>
      <IconBtn $w={28} aria-label="新建库面板"><Icon name="copy" size={15} /></IconBtn>
    </LibTop>
    <LibPreview />
    <LibSearch>
      <CountText $w={166}>1 个项目</CountText>
      <Icon name="searchDark" size={13} />
      <Field aria-label="搜索库" />
    </LibSearch>
    <Table>
      <colgroup><col /><col style={{ width: 71 }} /><col style={{ width: 71 }} /><col style={{ width: 129 }} /><col style={{ width: 71 }} /><col style={{ width: 18 }} /></colgroup>
      <thead>
        <tr>
          <th><NameCell $head>名称 <Tri $s={5} /></NameCell></th>
          <th>链接</th><th>使用次数</th><th>修改日期</th><th>类型</th><th aria-label="更多" />
        </tr>
      </thead>
      <tbody>
        <tr>
          <td><NameCell><Icon name="graphic" size={14} />矩形</NameCell></td>
          <td /><td>1</td><td>2022/5/7 20:14:36</td><TypeCell>图形</TypeCell><td />
        </tr>
      </tbody>
    </Table>
    <LibFoot>
      <IconBtn $w={16} aria-label="新建元件"><Icon name="page" size={13} /></IconBtn>
      <IconBtn $w={17} aria-label="新建文件夹"><Icon name="folder" size={13} /></IconBtn>
      <IconBtn aria-label="属性"><Icon name="info" size={13} /></IconBtn>
      <IconBtn aria-label="删除"><Icon name="trash" size={13} /></IconBtn>
      <ScrollBar><Tri $d="left" $s={3} $c="#666" /><Tri $d="right" $s={3} $c="#666" /></ScrollBar>
    </LibFoot>
  </Panel>
);

/* ---------- floating windows ---------- */
const Dialog = styled.form`
  position: absolute;
  left: 849px;
  top: 472px;
  width: 431px;
  padding: 0 7px 7px;
  border-radius: 6px 6px 0 0;
  background: linear-gradient(#b9c6d6, #d4dfec 28px, #d5e1ec);
  box-shadow: 0 0 0 1px #5a6068;
`;
const DialogTitle = styled.div`
  display: flex;
  align-items: center;
  justify-content: space-between;
  height: 29px;
  padding: 6px 2px 0 4px;
  color: #4a5a70;
`;
const CloseBox = styled.button`
  width: 31px;
  height: 17px;
  border: 1px solid #8f9db0;
  border-radius: 2px;
  display: flex;
  align-items: center;
  justify-content: center;
`;
const DialogBody = styled.div`
  height: 149px;
  padding: 16px 10px 0 14px;
  background: #414141;
  display: grid;
  grid-template-columns: 60px minmax(0, 1fr) 69px;
  grid-template-rows: 19px 21px 17px 19px;
  row-gap: 12px;
  align-items: center;
`;
const DialogLabel = styled.label`
  padding-left: ${(p) => p.$in || 6}px;
  color: #d0d0d0;
`;
const TypeRow = styled.div`
  display: flex;
  align-items: center;
  position: relative;
  > span { margin: 0 17px 0 12px; }
`;
const Options = styled.ul`
  position: absolute;
  left: -1px;
  top: 21px;
  width: 94px;
  margin: 0;
  padding: 0;
  list-style: none;
  border: 1px solid #1e1e1e;
  background: #434343;
  li {
    height: 22px;
    padding-left: 5px;
    display: grid;
    grid-template-columns: 21px 1fr;
    align-items: center;
  }
  li:hover, li[data-hover] { background: #505050; }
`;
const Advanced = styled.button`
  display: flex;
  align-items: center;
  gap: 10px;
  color: #d0d0d0;
`;
const NameField = styled(Field)`
  height: 19px;
  margin-right: 24px;
`;
const REG = [0, 1, 2].flatMap((r) => [0, 1, 2].map((c) => [c, r]));
const ConvertDialog = () => (
  <Dialog aria-label="转换为元件">
    <DialogTitle>
      转换为元件
      <CloseBox type="button" aria-label="关闭">
        <svg width="14" height="11"><path d="M3 1.500l8 8M11 1.500l-8 8" stroke="#53627a" strokeWidth="4" /><path d="M3.500 2l7 7M10.500 2l-7 7" stroke="#f4f6ff" strokeWidth="2" /></svg>
      </CloseBox>
    </DialogTitle>
    <DialogBody>
      <DialogLabel htmlFor="name">名称(N):</DialogLabel>
      <NameField id="name" defaultValue="元件 1" />
      <PushButton type="button" $h={20} $main>确定</PushButton>
      <DialogLabel>类型(T):</DialogLabel>
      <TypeRow>
        <Select label="类型(T)" options={["图形"]} $w={87} $h={19} $dark />
        <span>对齐:</span>
        <svg width="24" height="22" viewBox="0 0 24 22">
          <path d="M4 3h16M4 11h16M4 19h16M4 3v16M12 3v16M20 3v16" stroke="#aaa" strokeDasharray="1 1" />
          {REG.map(([c, r]) => (
            <rect key={`${c}${r}`} x={c * 8 + 2} y={r * 8 + 1} width="4" height="4" fill={c + r ? "#fff" : "#000"} stroke="#000" />
          ))}
        </svg>
        <Options role="listbox" aria-label="类型">
          <li><span />影片剪辑</li>
          <li data-hover><span />按钮</li>
          <li>
            <svg width="12" height="10"><path d="M1 5l3.500 3.500L11 1.500" fill="none" stroke="#ccc" strokeWidth="2" /></svg>图形
          </li>
        </Options>
      </TypeRow>
      <PushButton type="button">取消</PushButton>
      <DialogLabel $in={10}>文件夹:</DialogLabel><span /><span />
      <Advanced type="button"><Tri $d="right" $s={4} /> 高级</Advanced>
    </DialogBody>
  </Dialog>
);
const Ime = styled.div`
  position: absolute;
  left: 1707px;
  top: 390px;
  width: 155px;
  height: 26px;
  padding: 0 8px;
  display: flex;
  align-items: center;
  justify-content: space-between;
  border: 2px solid #a9c3e2;
  border-radius: 4px;
  background: linear-gradient(#f2f7fd, #dfeaf7);
  color: #3f6894;
  font-weight: 700;
  font-size: 13px;
`;
const Meter = styled.div`
  position: absolute;
  left: 1910px;
  top: 738px;
  width: 8px;
  height: 60px;
  border: 1px solid #777;
  border-radius: 5px;
  background: linear-gradient(#111 50%, transparent 50%), repeating-linear-gradient(#1f7a35 0 1px, #6dd07f 1px 3px);
`;
const Subtitle = styled.p`
  position: absolute;
  left: 0;
  right: 0;
  top: 903px;
  margin: 0;
  text-align: center;
  font: 500 63px/88px "Noto Sans CJK SC", sans-serif;
  color: #fff;
  -webkit-text-stroke: 5px #262626;
  paint-order: stroke fill;
`;
const Watermark = styled.div`
  position: absolute;
  left: 11px;
  top: 1030px;
  display: flex;
  align-items: center;
  gap: 10px;
  font: 700 32px/38px "DejaVu Sans", sans-serif;
  color: #8a8a8a;
  opacity: 0.9;
`;
const Pointer = styled.svg`
  position: absolute;
  left: 976px;
  top: 594px;
`;
const blue = { fill: "#3f6894" };

export default function App() {
  return (
    <Page>
      <Global />
      <Window>
        <TopBar />
        <Work>
          <Column>
            <DockBar>◂◂</DockBar>
            <ColorPanel />
            <AlignPanel />
            <ScenePanel />
            <PresetPanel />
          </Column>
          <Column>
            <TimelinePanel />
            <ToolsPanel />
            <DocumentPanel />
          </Column>
          <Column>
            <DockBar $right>▸▸</DockBar>
            <PropertiesPanel />
            <LibraryPanel />
          </Column>
        </Work>
      </Window>
      <Meter />
      <ConvertDialog />
      <Pointer width="16" height="20" viewBox="0 0 16 20">
        <path d="M1 1v15l4-4 3 6 3-1-3-6h6z" fill="#fff" stroke="#222" />
      </Pointer>
      <Ime>
        <svg width="16" height="18"><path d="M1 1h14v16H1z M3.500 3.500h9v11h-9z" fill="none" stroke="#3f6894" /><circle cx="8" cy="9" r="2.500" fill="none" stroke="#3f6894" strokeWidth="1.500" /><path d="M9 11l2 3" stroke="#3f6894" /></svg>
        中
        <svg width="13" height="13"><path d="M9 0q6 8-1 12-5 2-8-2 9 1 9-10z" {...blue} /></svg>
        <svg width="12" height="12"><circle cx="2.500" cy="5.500" r="1.500" fill="none" stroke="#3f6894" /><circle cx="9" cy="5" r="1.500" {...blue} /><path d="M10 5q0 3-2 4" stroke="#3f6894" fill="none" /></svg>
        <svg width="15" height="10"><rect width="15" height="10" rx="1" {...blue} /><path d="M2 2.500h11M2 5h11M4 7.500h7" stroke="#fff" strokeDasharray="1 1" /></svg>
        <svg width="12" height="14"><circle cx="6" cy="3.500" r="3.500" {...blue} /><path d="M1 14V9q5-4 10 0v5z" {...blue} /></svg>
        <svg width="14" height="14"><path d="M1 11l6-6q-1-4 3-5l1 0-2 3 2 2 3-2q1 5-4 5L4 14q-3 0-3-3z" {...blue} /></svg>
      </Ime>
      <Subtitle>是用来做这个这个代码动画的</Subtitle>
      <Watermark>
        <svg width="38" height="38" viewBox="0 0 38 38">
          <rect width="38" height="38" rx="7" fill="#7c7c7c" />
          <path d="M11 4l20 11q4 3 0 5l-14 8" fill="none" stroke="#4a4a4a" strokeWidth="3" />
          <circle cx="8" cy="17" r="3" fill="none" stroke="#4a4a4a" strokeWidth="3" />
          <circle cx="15" cy="31" r="3" fill="none" stroke="#4a4a4a" strokeWidth="3" />
          <path d="M16 17h11M21.500 17v9" stroke="#ddd" strokeWidth="2" />
          <path d="M4 3h9v9h-4V8H4zM26 2h6l1 2h5v8H26z" fill="#d5d5d5" />
        </svg>
        tafe.cc
      </Watermark>
    </Page>
  );
}
